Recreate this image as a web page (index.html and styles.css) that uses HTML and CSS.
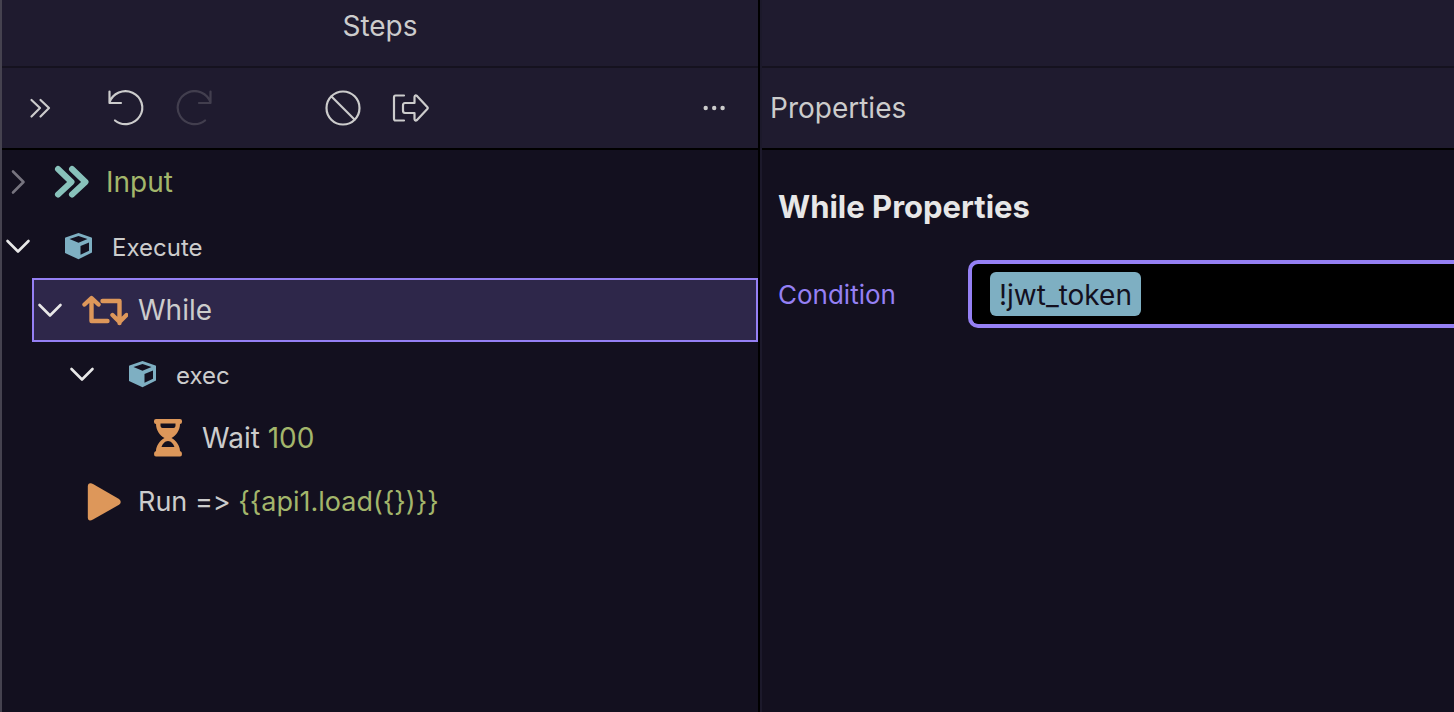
FILE: index.html
```
<!DOCTYPE html>
<html lang="en">
<head>
<meta charset="utf-8">
<title>Steps</title>
<link rel="stylesheet" href="styles.css">
</head>
<body>
<svg class="defs" aria-hidden="true">
  <symbol id="chevron-down" viewBox="0 0 32 32"><path d="M5.500 11l10.500 10.500 10.500-10.500" fill="none" stroke="currentColor" stroke-width="2.600" stroke-linecap="round" stroke-linejoin="round"/></symbol>
  <symbol id="cube" viewBox="0 0 32 32"><path fill="currentColor" fill-rule="evenodd" d="M16.500 2.900L29.500 7.400Q30 7.600 30 8.300V22.500L16.500 29.300L3 23V8.300Q3 7.600 3.500 7.400ZM16.500 6L7.500 9.100 16.500 12.700 25.500 9.100ZM18.500 16.100V24.800L27 20.800V12.500Z"/></symbol>
</svg>
<main class="app">
  <section class="pane steps">
    <header class="pane-title"><h1>Steps</h1></header>
    <div class="toolbar" role="toolbar" aria-label="Step actions">
      <button class="tool expand" aria-label="Expand all">
        <svg width="40" height="40" viewBox="0 0 40 40"><path d="M11.500 12l8.500 8-8.500 8.500M20.500 12l8.500 8-8.500 8.500"/></svg>
      </button>
      <button class="tool undo" aria-label="Undo">
        <svg width="40" height="40" viewBox="0 0 40 40"><path d="M3.500 3.500v11.500H15M3.500 14.500A16.800 16.500 0 1 1 9 32.500"/></svg>
      </button>
      <button class="tool redo" aria-label="Redo" disabled>
        <svg width="40" height="40" viewBox="0 0 40 40"><path d="M36.500 3.500v11.500H25M36.500 14.500A16.800 16.500 0 1 0 31 32.500"/></svg>
      </button>
      <button class="tool disable" aria-label="Disable step">
        <svg width="40" height="40" viewBox="0 0 40 40"><circle cx="20" cy="20" r="16.500"/><path d="M8.500 8.500l23 23"/></svg>
      </button>
      <button class="tool export" aria-label="Export step">
        <svg width="40" height="40" viewBox="0 0 40 40"><path d="M14 7.500H5.500Q4 7.500 4 9.500V30.500Q4 32.500 5.500 32.500H14M23 15H15Q13 15 13 17.500V22.500Q13 25 15 25H24.500V31Q25 33.500 27 32L37.500 20.800Q38.200 20 37.500 19.200L27 8Q25 6.500 24.500 9V15H23"/></svg>
      </button>
      <button class="tool more" aria-label="More actions">
        <svg width="40" height="40" viewBox="0 0 40 40"><g class="dots"><circle cx="11.700" cy="20" r="2.200"/><circle cx="20.200" cy="20" r="2.200"/><circle cx="28.600" cy="20" r="2.200"/></g></svg>
      </button>
    </div>
    <ul class="tree" role="tree" aria-label="Steps">
      <li role="treeitem" aria-expanded="false">
        <div class="row">
          <button class="toggle closed" aria-label="Expand Input"><svg width="32" height="32"><use href="#chevron-down"/></svg></button>
          <svg class="icon teal" width="48" height="40" viewBox="0 0 48 40"><path d="M10 7l13.500 13-13.500 12.500M24 7l13.500 13-13.500 12.500" fill="none" stroke="currentColor" stroke-width="6" stroke-linecap="round" stroke-linejoin="round"/></svg>
          <span class="value">Input</span>
        </div>
      </li>
      <li role="treeitem" aria-expanded="true">
        <div class="row group">
          <button class="toggle" aria-label="Collapse Execute"><svg width="32" height="32"><use href="#chevron-down"/></svg></button>
          <svg class="icon blue" width="48" height="32"><use href="#cube"/></svg>
          <span>Execute</span>
        </div>
        <ul role="group">
          <li role="treeitem" aria-expanded="true" aria-selected="true">
            <div class="row selected">
              <button class="toggle" aria-label="Collapse While"><svg width="32" height="32"><use href="#chevron-down"/></svg></button>
              <svg class="icon orange" width="48" height="40" viewBox="0 0 48 40"><path d="M4.500 14.500L11.500 8l7 6.500M11.500 9V31H27.500M22.500 11H39.500V33M32.500 25l7 7 7-7" fill="none" stroke="currentColor" stroke-width="4.400" stroke-linecap="round" stroke-linejoin="round"/></svg>
              <span>While</span>
            </div>
            <ul role="group">
              <li role="treeitem" aria-expanded="true">
                <div class="row group">
                  <button class="toggle" aria-label="Collapse exec"><svg width="32" height="32"><use href="#chevron-down"/></svg></button>
                  <svg class="icon blue" width="48" height="32"><use href="#cube"/></svg>
                  <span>exec</span>
                </div>
                <ul role="group">
                  <li role="treeitem">
                    <div class="row leaf">
                      <svg class="icon orange" width="48" height="40" viewBox="0 0 48 40"><path fill="currentColor" fill-rule="evenodd" d="M12 1H36Q38 1 38 3V4Q38 6 36 6C36 12 32 18 27.500 20C32 22 36 28 36 33Q38 33.500 38 36Q38 38.500 36 38.500H12Q10 38.500 10 36Q10 33.500 12 33C12 28 16 22 20.500 20C16 18 12 12 12 6Q10 6 10 4V3Q10 1 12 1ZM16.500 5.500V8Q16.800 10 18.500 10H29.500Q31.200 10 31.500 8V5.500ZM17.500 29H30.500C29.500 26 27 23 24 23S18.500 26 17.500 29Z"/></svg>
                      <span>Wait <span class="value">100</span></span>
                    </div>
                  </li>
                </ul>
              </li>
            </ul>
          </li>
          <li role="treeitem">
            <div class="row leaf expression">
              <svg class="icon orange" width="48" height="40" viewBox="0 0 48 40"><path fill="currentColor" d="M7.800 4.500Q7.800 .8 11 1.200L13 2L39 17Q42.500 20 39 22.800L13 37.500Q8 40 7.800 35.500Z"/></svg>
              <span>Run =&gt; <span class="value">{{api1.load({})}}</span></span>
            </div>
          </li>
        </ul>
      </li>
    </ul>
  </section>
  <section class="pane properties">
    <div class="pane-title"></div>
    <header class="toolbar"><h2>Properties</h2></header>
    <form class="form">
      <h3>While Properties</h3>
      <div class="field">
        <label for="condition">Condition</label>
        <div class="control"><input id="condition" type="text" size="9" value="!jwt_token" spellcheck="false"></div>
      </div>
    </form>
  </section>
</main>
</body>
</html>
```
FILE: styles.css
```
* {
  box-sizing: border-box;
}

body {
  margin: 0;
  background: #13101f;
  color: #cccccc;
  font: 28px/32px Inter, "Liberation Sans", sans-serif;
  font-variant-ligatures: none;
  overflow-x: hidden;
}

h1, h2, h3, ul {
  margin: 0;
  padding: 0;
}

h1, h2 {
  font-size: 28px;
  font-weight: 400;
}

button {
  display: grid;
  place-items: center;
  padding: 0;
  border: 0;
  background: none;
  color: inherit;
}

.defs {
  display: none;
}

.app {
  display: grid;
  grid-template-columns: minmax(0, 380fr) minmax(0, 347fr);
  min-height: 100vh;
}

.steps {
  border-left: 2px solid #45424f;
  border-right: 2px solid #000;
}

.properties {
  border-left: 2px solid #1c192b;
}

.pane-title {
  display: flex;
  justify-content: center;
  height: 68px;
  padding-top: 10px;
  background: #1f1b2f;
  border-bottom: 2px solid #15121f;
}

.toolbar {
  display: flex;
  align-items: center;
  height: 82px;
  padding: 0 24px 0 18px;
  background: #1f1b2f;
  border-bottom: 2px solid #000;
}

.properties .toolbar {
  padding-left: 8px;
}

.tool svg {
  fill: none;
  stroke: #cccccc;
  stroke-width: 2.2;
  stroke-linecap: round;
  stroke-linejoin: round;
}

.tool .dots {
  fill: #cccccc;
  stroke: none;
}

.undo {
  margin-left: 46px;
}

.redo {
  margin-left: 28px;
  opacity: 0.2;
}

.disable {
  margin-left: 109px;
}

.export {
  margin-left: 27px;
}

.more {
  margin-left: auto;
}

.tree, .tree ul {
  list-style: none;
}

.tree ul {
  margin-left: 32px;
}

.row {
  display: flex;
  align-items: center;
  height: 64px;
  white-space: pre;
}

.row.selected {
  margin-left: -2px;
  background: #2e274a;
  border: 2px solid #9580f4;
}

.toggle {
  width: 32px;
  color: #e8e8e8;
}

.toggle.closed {
  color: #77747f;
  transform: rotate(-90deg);
}

.icon {
  flex: none;
  margin: 0 10px 0 14px;
}

.leaf .icon {
  margin-left: 46px;
}

.expression {
  font-size: 27px;
}

.group {
  font-size: 24px;
}

.group .icon {
  margin-left: 20px;
}

.group span {
  padding-top: 4px;
}

.teal {
  color: #88c2bb;
}

.blue {
  color: #7eafc2;
}

.orange {
  color: #dd975a;
}

.value {
  color: #a3b66b;
}

.form {
  padding: 37px 0 0 16px;
}

.form h3 {
  color: #e7e7e7;
  font-size: 31px;
  line-height: 40px;
  font-weight: 700;
}

.field {
  display: flex;
  align-items: center;
  margin-top: 33px;
}

.field label {
  flex: 0 0 190px;
  padding-top: 2px;
  color: #9580f4;
  font-size: 26px;
}

.control {
  flex: 1;
  display: flex;
  padding: 8px 0 8px 18px;
  background: #000;
  border: 4px solid #9580f4;
  border-right: 0;
  border-radius: 10px 0 0 10px;
}

.control input {
  field-sizing: content;
  height: 44px;
  padding: 2px 9px 0;
  border: 0;
  border-radius: 6px;
  outline: 0;
  background: #7eafc2;
  color: #13101f;
  font: inherit;
}
```
